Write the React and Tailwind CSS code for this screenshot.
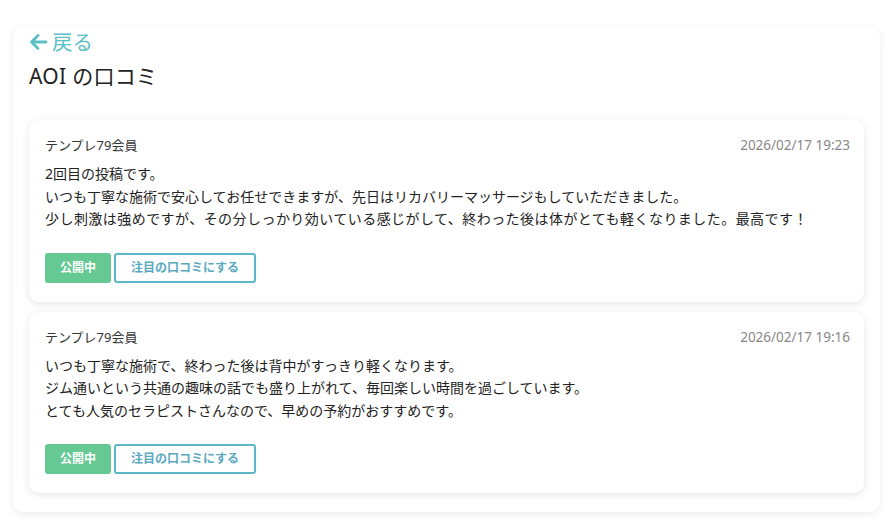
import React from "react";

const reviews = [
  {
    name: "テンプレ79会員",
    date: "2026/02/17 19:23",
    lines: [
      "2回目の投稿です。",
      "いつも丁寧な施術で安心してお任せできますが、先日はリカバリーマッサージもしていただきました。",
      "少し刺激は強めですが、その分しっかり効いている感じがして、終わった後は体がとても軽くなりました。最高です！",
    ],
  },
  {
    name: "テンプレ79会員",
    date: "2026/02/17 19:16",
    lines: [
      "いつも丁寧な施術で、終わった後は背中がすっきり軽くなります。",
      "ジム通いという共通の趣味の話でも盛り上がれて、毎回楽しい時間を過ごしています。",
      "とても人気のセラピストさんなので、早めの予約がおすすめです。",
    ],
  },
];

export default function App() {
  return (
    <div
      className="w-[893px] h-[532px] bg-white overflow-hidden pt-[28px] px-[13px]"
      style={{ fontFamily: '"Noto Sans", "Noto Sans CJK JP", sans-serif' }}
    >
      <div className="bg-white rounded-[10px] shadow-[0_2px_8px_rgba(0,0,0,0.08)] px-[16px] pb-[19px]">
        <div className="flex items-center gap-[4px] text-[#5bbfc6] text-[20.5px] leading-[28px] pt-[1px] -mt-[1px]">
          <svg width="19" height="18" viewBox="0 0 19 18" fill="none" stroke="#5bbfc6" strokeWidth="2.8" strokeLinecap="round" strokeLinejoin="round">
            <path d="M17 9H3M9 2.5L2.5 9L9 15.5" />
          </svg>
          <span>戻る</span>
        </div>
        <div className="text-[21px] leading-[28px] text-[#222] mt-[6px] tracking-[0.3px]">AOI の口コミ</div>
        <div className="mt-[30px] flex flex-col gap-[10px]">
          {reviews.map((r, i) => (
            <div key={i} className="bg-white rounded-[10px] shadow-[0_2px_8px_rgba(0,0,0,0.10)] px-[16px] pt-[15px] pb-[19px]">
              <div className="flex justify-between items-center text-[13px] leading-[20px]">
                <span className="text-[#333]">{r.name}</span>
                <span className="text-[#888] text-[13.5px] -mr-[2px]">{r.date}</span>
              </div>
              <div className="mt-[8px] text-[14px] leading-[22.5px] text-[#222]">
                {r.lines.map((l, j) => (
                  <div key={j} className={j === 2 && i === 0 ? "tracking-[0.45px]" : ""}>{l}</div>
                ))}
              </div>
              <div className="mt-[22px] flex gap-[3px]">
                <span className="w-[66px] h-[30px] rounded-[3px] bg-[#66c994] text-white text-[12px] font-bold flex items-center justify-center">公開中</span>
                <span className="w-[142px] h-[30px] rounded-[3px] border-2 border-[#5cb8c9] text-[#5aa9bf] text-[12px] font-bold flex items-center justify-center">注目の口コミにする</span>
              </div>
            </div>
          ))}
        </div>
      </div>
    </div>
  );
}
